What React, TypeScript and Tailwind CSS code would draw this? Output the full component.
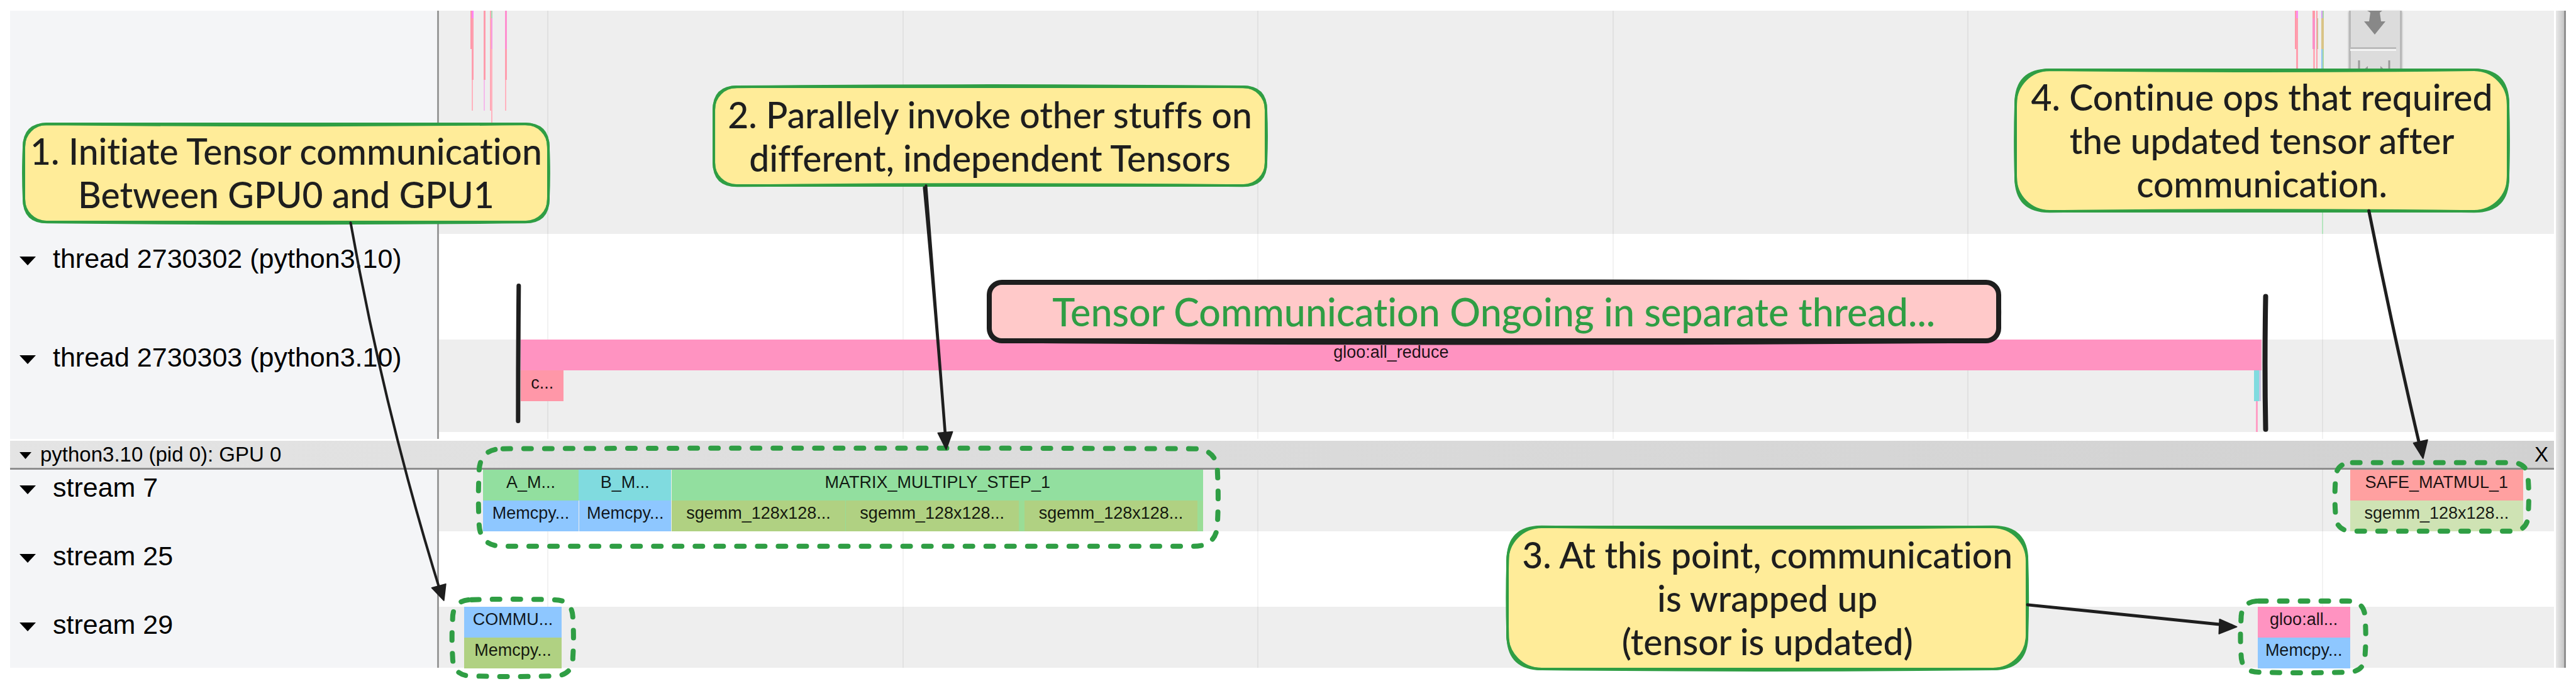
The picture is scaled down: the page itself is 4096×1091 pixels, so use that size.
import type { CSSProperties, ReactNode } from "react";

/* Timeline units: the visible time range is 3360 units wide. */
const RANGE = 3360;

/* Units of the free canvas that carries the notes and the ink. */
const CANVAS_W = 4092;
const CANVAS_H = 1090;

const span = (start: number, length: number): CSSProperties => ({
  left: `${(start / RANGE) * 100}%`,
  width: `${(length / RANGE) * 100}%`,
});

type Slice = { start: number; length: number; color: string; label?: string };

const GRID = [172, 736, 1300, 1864, 2428, 2991];

function Gridlines() {
  return (
    <>
      {GRID.map((g) => (
        <div key={g} className="absolute inset-y-0 border-l-2 border-black/5" style={{ left: `${(g / RANGE) * 100}%` }} />
      ))}
    </>
  );
}

function SliceRow({ slices }: { slices: Slice[] }) {
  return (
    <div className="relative h-[49px]">
      {slices.map((s, i) => (
        <div
          key={i}
          className={`absolute inset-y-0 overflow-hidden whitespace-nowrap text-center text-[27px] leading-[40px] text-black/90 ${s.color}`}
          style={span(s.start, s.length)}
        >
          {s.label}
        </div>
      ))}
    </div>
  );
}

function Track({
  label,
  height,
  shaded,
  separated,
  children,
}: {
  label?: string;
  height: string;
  shaded?: boolean;
  separated?: boolean;
  children?: ReactNode;
}) {
  return (
    <section className={`flex ${height}`}>
      <div className={`w-[682px] shrink-0 border-r-3 border-[#9a9a9a] bg-[#f4f5f7] ${separated ? "pt-[11px]" : ""}`}>
        {label && (
          <button type="button" className="flex h-[56px] items-center pl-[15px] text-[43px] leading-[56px]">
            <svg viewBox="0 0 26 14" className="mt-[8px] mr-[27px] h-[14px] w-[26px]" aria-hidden="true">
              <path d="M0 0H26L13 14Z" />
            </svg>
            {label}
          </button>
        )}
      </div>
      <div className={`relative min-w-0 flex-1 ${shaded ? "bg-[#eeeeee]" : "bg-white"}`}>
        <Gridlines />
        {children}
      </div>
    </section>
  );
}

/* Narrow call-stack slivers in the top track: x, width, top, height, colour. */
const SLIVERS: [number, number, number, number, string][] = [
  [50, 2, 0, 61, "bg-[#ff97a8]"],
  [52, 3, 0, 12, "bg-[#ff85f0]"],
  [52, 3, 12, 98, "bg-[#ff9eae]"],
  [52, 2, 110, 49, "bg-[#ffb3bf]"],
  [71, 3, 0, 110, "bg-[#ff9cac]"],
  [71, 2, 110, 49, "bg-[#f5b9ec]"],
  [81, 2, 0, 159, "bg-[#ffa9b6]"],
  [83, 2, 0, 12, "bg-[#a5dcb8]"],
  [83, 2, 12, 49, "bg-[#f79be0]"],
  [83, 2, 61, 120, "bg-[#ffb3bf]"],
  [105, 3, 0, 61, "bg-[#ff8fd0]"],
  [105, 3, 61, 49, "bg-[#ff9eae]"],
  [105, 2, 110, 49, "bg-[#ffb3bf]"],
  [2948, 2, 0, 61, "bg-[#ff97a8]"],
  [2950, 3, 0, 12, "bg-[#ff8cec]"],
  [2950, 3, 12, 98, "bg-[#ff9eae]"],
  [2976, 4, 0, 12, "bg-[#ff97a8]"],
  [2976, 4, 12, 49, "bg-[#fb90c6]"],
  [2977, 3, 61, 49, "bg-[#ffaab8]"],
  [2982, 2, 0, 110, "bg-[#ff9cac]"],
  [2984, 1, 12, 49, "bg-[#b0d182]"],
  [2990, 2, 0, 12, "bg-[#d59bf5]"],
  [2992, 2, 0, 12, "bg-[#aad8a6]"],
  [2990, 4, 12, 49, "bg-[#d9c487]"],
  [2990, 2, 61, 60, "bg-[#8fc4f5]"],
  [2992, 2, 61, 60, "bg-[#aad8a0]"],
  [2991, 2, 121, 234, "bg-[#b5e5bf]"],
];

function Toolbar() {
  return (
    <div
      className="absolute top-0 flex h-[120px] flex-col items-center border-x-3 border-[#b9b9b9] bg-[#dcdcdc] shadow-sm shadow-black/30"
      style={span(3034, 84)}
    >
      <button type="button" aria-label="Pan" className="flex h-[58px] w-full justify-center">
        <svg viewBox="0 0 34 38" className="mr-[2px] h-[38px] w-[34px]" fill="#888888" aria-hidden="true">
          <path d="M5 0H29L25 3L27 17H34L17 38L0 17H8L10 3Z" />
        </svg>
      </button>
      <hr className="mr-[6px] h-[6px] w-[73px] border-t-3 border-b-3 border-t-[#bbbbbb] border-b-[#f4f4f4]" />
      <button type="button" aria-label="Timing" className="flex w-full justify-center pt-[15px]">
        <svg viewBox="0 0 52 32" className="mr-[4px] h-[32px] w-[52px]" aria-hidden="true">
          <path d="M2 0V32M50 0V32" stroke="#999" strokeWidth="3" />
          <path d="M16 9L4 20L16 31V24H36V31L48 20L36 9V16H16Z" fill="#999" />
        </svg>
      </button>
    </div>
  );
}

function Callout({
  x,
  y,
  w,
  h,
  look,
  children,
}: {
  x: number;
  y: number;
  w: number;
  h: number;
  look: string;
  children: ReactNode;
}) {
  return (
    <div
      className={`absolute flex items-center justify-center whitespace-nowrap text-center font-[Lato,sans-serif] font-medium [font-variant-ligatures:none] ${look}`}
      style={{ left: `${(x / CANVAS_W) * 100}%`, top: y, width: `${(w / CANVAS_W) * 100}%`, height: h }}
    >
      <p>{children}</p>
    </div>
  );
}

const NOTE = "border-4 border-[#2f9e44] bg-[#ffec99] text-[57px] leading-[69px] text-[#1e1e1e]";

/* Rounded rectangle whose four sides bulge outward (or inward when negative). */
function sketch(
  x1: number,
  y1: number,
  x2: number,
  y2: number,
  r: number,
  top = 0,
  right = 0,
  bottom = 0,
  left = 0,
) {
  const mx = (x1 + x2) / 2;
  const my = (y1 + y2) / 2;
  return [
    `M${x1 + r} ${y1}`,
    `Q${mx} ${y1 - top * 2} ${x2 - r} ${y1}`,
    `Q${x2} ${y1} ${x2} ${y1 + r}`,
    `Q${x2 + right * 2} ${my} ${x2} ${y2 - r}`,
    `Q${x2} ${y2} ${x2 - r} ${y2}`,
    `Q${mx} ${y2 + bottom * 2} ${x1 + r} ${y2}`,
    `Q${x1} ${y2} ${x1} ${y2 - r}`,
    `Q${x1 - left * 2} ${my} ${x1} ${y1 + r}`,
    `Q${x1} ${y1} ${x1 + r} ${y1}Z`,
  ].join("");
}

function Ink() {
  return (
    <svg
      viewBox={`0 0 ${CANVAS_W} ${CANVAS_H}`}
      preserveAspectRatio="none"
      className="pointer-events-none absolute inset-0 h-full w-full"
      fill="none"
      strokeLinecap="round"
      strokeLinejoin="round"
      aria-hidden="true"
    >
      {/* second pass of the hand-drawn outlines */}
      <g stroke="#2f9e44" strokeWidth="4">
        <path d={sketch(38, 197, 871, 353, 37, -2, 1, 2, 1)} />
        <path d={sketch(1134, 138, 2011, 295, 37, 2, 1, -2, 0)} />
        <path d={sketch(3202, 111, 3984, 336, 54, -2, 1, -2, 1)} />
        <path d={sketch(2395, 837, 3220, 1063, 54, -2, 1, 2, 1)} />
      </g>
      <path d={sketch(1571, 449, 3175, 542, 22, 2, 1, 3, 0)} stroke="#1e1e1e" strokeWidth="6" />

      {/* dashed highlights */}
      <g stroke="#2f9e44" strokeWidth="8" strokeDasharray="12 21">
        <path d={sketch(761, 713, 1934, 868, 38, 1, 1, 0, 1)} />
        <path d={sketch(719, 953, 910, 1074, 30, 1, 1, 1, 1)} />
        <path d={sketch(3710, 735, 4016, 844, 27, 0, 1, 0, 1)} />
        <path d={sketch(3560, 955, 3757, 1068, 28, 0, 1, 1, 1)} />
      </g>

      {/* arrows */}
      <g stroke="#1e1e1e" strokeWidth="4">
        <path d="M557 354Q610 653 702 948" />
        <path d="M1471 295Q1487 502 1503 705M1468 298Q1486 490 1502 700" />
        <path d="M3763 335Q3803 535 3847 722" strokeWidth="5" />
        <path d="M3221 961L3545 994" strokeWidth="5" />
      </g>
      <g fill="#1e1e1e" stroke="#1e1e1e" strokeWidth="2">
        <path d="M686 934L708 928L705 954Z" />
        <path d="M1490 688L1513 686L1503 714Z" />
        <path d="M3834 704L3856 699L3849 728Z" />
        <path d="M3526 984L3553 996L3525 1007Z" />
      </g>

      {/* start and end markers of the communication */}
      <g stroke="#1e1e1e" strokeWidth="7">
        <path d="M824 454Q823 560 823 669" />
        <path d="M3599 471Q3597 580 3599 682" strokeWidth="8" />
      </g>
    </svg>
  );
}

export default function App() {
  return (
    <main className="relative flex gap-[3px] overflow-hidden bg-white pt-[17px] pr-4 pb-[29px] pl-4 font-['Liberation_Sans',Arial,sans-serif] text-black">
      <div className="min-w-0 flex-1">
        <Track height="h-[355px]" shaded>
          {SLIVERS.map(([x, w, top, h, color], i) => (
            <div key={i} className={`absolute ${color}`} style={{ ...span(x, w), top, height: h }} />
          ))}
          <Toolbar />
        </Track>
        <Track height="h-[168px]" label="thread 2730302 (python3.10)" separated />
        <Track height="h-[147px]" label="thread 2730303 (python3.10)" shaded>
          <SliceRow slices={[{ start: 130, length: 2765, color: "bg-[#ff93c1]", label: "gloo:all_reduce" }]} />
          <SliceRow
            slices={[
              { start: 130, length: 68, color: "bg-[#ff97a8]", label: "c..." },
              { start: 2883, length: 8, color: "bg-[#80dbdf]" },
              { start: 2891, length: 3, color: "bg-[#c9c4e0]" },
            ]}
          />
          <SliceRow slices={[{ start: 2886, length: 3, color: "bg-[#ff9fc6]" }]} />
        </Track>
        <Track height="h-[11px]" />

        <header className="mt-[3px] flex h-[46px] items-center justify-between border-b-3 border-[#8e8e8e] bg-linear-to-r from-[#e4e4e4] to-[#d1d1d1] pr-[9px] pl-[15px] text-[33px] leading-[40px]">
          <button type="button" className="flex items-center">
            <svg viewBox="0 0 19 11" className="mt-[4px] mr-[14px] h-[11px] w-[19px]" aria-hidden="true">
              <path d="M0 0H19L9.5 11Z" />
            </svg>
            python3.10 (pid 0): GPU 0
          </button>
          <button type="button" aria-label="Close process">
            X
          </button>
        </header>

        <Track height="h-[98px]" label="stream 7" shaded>
          <SliceRow
            slices={[
              { start: 70, length: 152, color: "bg-[#92df9f]", label: "A_M..." },
              { start: 222, length: 147, color: "bg-[#80dbdf]", label: "B_M..." },
              { start: 370, length: 844, color: "bg-[#92df9f]", label: "MATRIX_MULTIPLY_STEP_1" },
              { start: 3036, length: 275, color: "bg-[#ffa0a0]", label: "SAFE_MATMUL_1" },
            ]}
          />
          <SliceRow
            slices={[
              { start: 70, length: 152, color: "bg-[#8ec7ff]", label: "Memcpy..." },
              { start: 223, length: 146, color: "bg-[#8ec7ff]", label: "Memcpy..." },
              { start: 370, length: 844, color: "bg-[#9add96]" },
              { start: 370, length: 275, color: "bg-[#b0d182]", label: "sgemm_128x128..." },
              { start: 646, length: 275, color: "bg-[#b0d182]", label: "sgemm_128x128..." },
              { start: 930, length: 275, color: "bg-[#b0d182]", label: "sgemm_128x128..." },
              { start: 3036, length: 275, color: "bg-[#cfe3b4]", label: "sgemm_128x128..." },
            ]}
          />
        </Track>
        <Track height="h-[120px]" label="stream 25" separated />
        <Track height="h-[97px]" label="stream 29" shaded>
          <SliceRow
            slices={[
              { start: 40, length: 155, color: "bg-[#8ec7ff]", label: "COMMU..." },
              { start: 2889, length: 147, color: "bg-[#ff93c1]", label: "gloo:all..." },
            ]}
          />
          <SliceRow
            slices={[
              { start: 40, length: 155, color: "bg-[#b0d182]", label: "Memcpy..." },
              { start: 2889, length: 147, color: "bg-[#8ec7ff]", label: "Memcpy..." },
            ]}
          />
        </Track>
      </div>

      <div className="w-4 shrink-0 border-r-3 border-[#909090] bg-linear-to-r from-[#e8e8e8] to-[#c6c6c6]" />

      <Callout x={36} y={195} w={837} h={160} look={`rounded-[38px] ${NOTE}`}>
        1. Initiate Tensor communication
        <br />
        Between GPU0 and GPU1
      </Callout>
      <Callout x={1132} y={136} w={881} h={161} look={`rounded-[38px] ${NOTE}`}>
        2. Parallely invoke other stuffs on
        <br />
        different, independent Tensors
      </Callout>
      <Callout x={3200} y={109} w={786} h={229} look={`rounded-[56px] ${NOTE}`}>
        4. Continue ops that required
        <br />
        the updated tensor after
        <br />
        communication.
      </Callout>
      <Callout x={2393} y={836} w={829} h={230} look={`rounded-[56px] ${NOTE}`}>
        3. At this point, communication
        <br />
        is wrapped up
        <br />
        (tensor is updated)
      </Callout>
      <Callout
        x={1567}
        y={445}
        w={1612}
        h={101}
        look="rounded-[24px] border-8 border-[#1e1e1e] bg-[#ffc9c9] text-[61px] leading-[76px] text-[#2f9e44]"
      >
        Tensor Communication Ongoing in separate thread...
      </Callout>
      <Ink />
    </main>
  );
}
